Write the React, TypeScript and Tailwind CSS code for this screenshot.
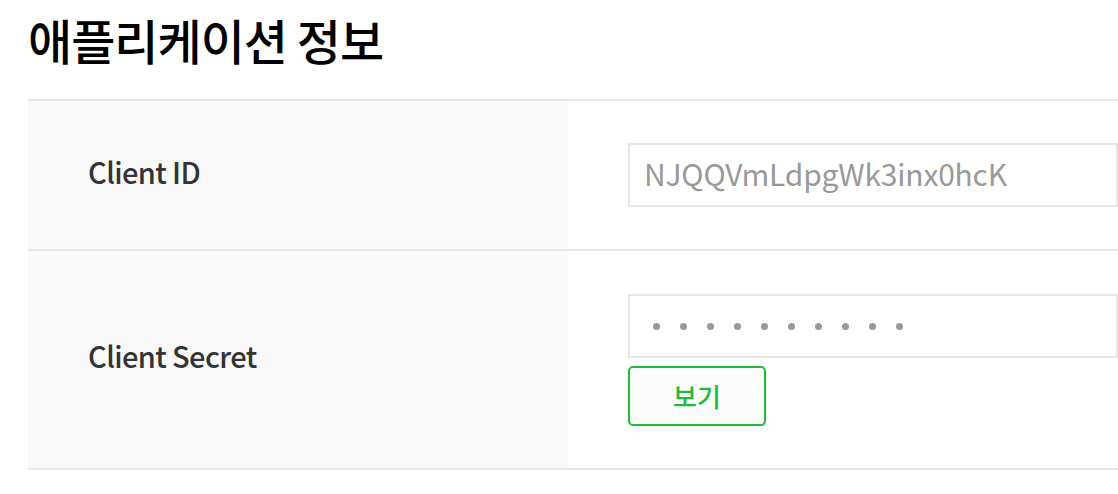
const FONT = "font-['Noto_Sans_CJK_KR','Noto_Sans',sans-serif]";

function Dots({ count }: { count: number }) {
  return (
    <div className="flex items-center gap-[20px]">
      {Array.from({ length: count }).map((_, i) => (
        <span key={i} className="block h-[7px] w-[7px] rounded-full bg-[#999999]" />
      ))}
    </div>
  );
}

export default function App() {
  return (
    <div className={`${FONT} min-h-screen bg-white pl-[28px]`}>
      <h1 className="pt-[8px] text-[48px] font-medium leading-[62px] tracking-[-1px] text-black">
        애플리케이션 정보
      </h1>
      <div className="mt-[29px] border-t-2 border-[#e6e6e6]">
        <div className="flex border-b-2 border-[#e6e6e6]">
          <div className="flex w-[540px] shrink-0 items-center bg-[#f9f9f9] pb-[7px] pl-[60px] text-[29px] font-medium tracking-[-0.6px] text-[#333333]">
            Client ID
          </div>
          <div className="flex-1 py-[42px] pl-[60px]">
            <div className="flex h-[64px] items-center border-2 border-[#e6e6e6] pb-[3px] pl-[14px] text-[30px] tracking-[-0.2px] text-[#999999]">
              NJQQVmLdpgWk3inx0hcK
            </div>
          </div>
        </div>
        <div className="flex border-b-2 border-[#e6e6e6]">
          <div className="flex w-[540px] shrink-0 items-center bg-[#f9f9f9] pb-[7px] pl-[60px] text-[29px] font-medium tracking-[-0.6px] text-[#333333]">
            Client Secret
          </div>
          <div className="flex-1 pb-[42px] pt-[43px] pl-[60px]">
            <div className="flex h-[64px] items-center border-2 border-[#e6e6e6] pl-[23px]">
              <Dots count={10} />
            </div>
            <button className="mt-[8px] flex h-[60px] w-[138px] items-center justify-center rounded-[5px] border-2 border-[#1fbb3a] bg-[#fcfcfc] pb-[2px] text-[26px] font-medium text-[#1fbb3a]">
              보기
            </button>
          </div>
        </div>
      </div>
    </div>
  );
}
